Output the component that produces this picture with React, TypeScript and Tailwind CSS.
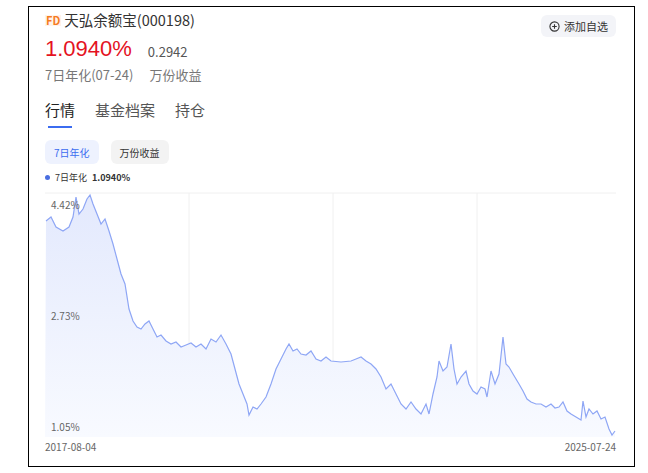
import React from "react";

const pts: [number, number][] = [[45,222],[50,218],[55,228],[62,232],[68,228],[72,218],[75,198],[78,215],[82,210],[86,200],[89,196],[92,205],[96,215],[100,225],[104,220],[108,232],[112,245],[116,260],[120,275],[124,285],[128,310],[132,322],[136,328],[140,330],[144,325],[148,322],[152,330],[156,338],[160,336],[165,342],[170,345],[175,343],[180,348],[185,346],[190,344],[195,348],[200,345],[205,350],[210,340],[215,343],[220,336],[225,345],[230,355],[234,370],[238,385],[242,395],[246,405],[248,416],[252,408],[256,410],[260,405],[265,398],[270,385],[275,370],[280,360],[285,350],[288,345],[292,352],[296,350],[300,355],[305,356],[310,352],[315,360],[320,362],[325,358],[330,362],[340,363],[350,362],[355,360],[360,358],[365,362],[370,365],[375,370],[380,378],[385,390],[390,385],[395,395],[400,405],[405,410],[410,403],[415,410],[420,415],[425,405],[428,415],[432,395],[436,378],[438,362],[442,372],[446,368],[450,345],[453,370],[456,385],[460,378],[465,372],[468,385],[472,392],[476,395],[480,388],[484,390],[486,398],[490,372],[494,385],[498,375],[502,338],[505,365],[508,368],[512,375],[518,385],[522,392],[526,400],[530,403],[535,405],[540,405],[545,408],[550,405],[554,409],[558,408],[562,403],[566,412],[570,415],[575,418],[580,421],[582,402],[585,418],[588,410],[592,415],[596,412],[600,420],[604,418],[608,430],[611,436],[614,432]];

export default function App() {
  const ox = 44, oy = 192;
  const line = pts.map(([x, y]) => `${x - ox},${y - oy}`).join(" ");
  const area = `0,246 ${line} ${614 - ox},246`;
  return (
    <div className="w-[648px] h-[473px] bg-white pt-[6px] pl-[28px]" style={{ fontFamily: '"Noto Sans CJK SC", "Liberation Sans", sans-serif' }}>
      <div className="w-[607px] h-[461px] border-[1.5px] border-black relative px-[16px]">
        <div className="flex items-center pt-[4px] h-[22px]">
          <span className="text-[11px] font-bold text-[#f57c1f] bg-[#fff3ea] px-[1px] leading-none mr-[3px]">FD</span>
          <span className="text-[14.5px] text-[#333]">天弘余额宝(000198)</span>
        </div>
        <button className="absolute right-[18px] top-[8px] h-[22px] px-[8px] rounded-[6px] bg-[#f3f4f8] text-[11px] text-[#333] flex items-center gap-[4px]">
          <svg width="11" height="11" viewBox="0 0 12 12"><circle cx="6" cy="6" r="5" fill="none" stroke="#333" strokeWidth="1.2"/><path d="M6 3.5v5M3.5 6h5" stroke="#333" strokeWidth="1.2"/></svg>
          添加自选
        </button>
        <div className="flex items-end mt-[7px]">
          <span className="text-[22px] leading-[26px] text-[#e4131f]" style={{ fontFamily: '"Liberation Sans", sans-serif' }}>1.0940%</span>
          <span className="ml-[16px] text-[13px] text-[#555] leading-[20px]">0.2942</span>
        </div>
        <div className="flex text-[13px] text-[#777] mt-[3px]">
          <span>7日年化(07-24)</span>
          <span className="ml-[16px]">万份收益</span>
        </div>
        <div className="flex text-[15px] text-[#555] mt-[14px] gap-[20px]">
          <div className="flex flex-col items-center"><span className="text-[#222]">行情</span><div className="w-[24px] h-[2px] bg-[#3b6cf0] mt-[5px]" /></div>
          <span>基金档案</span>
          <span>持仓</span>
        </div>
        <div className="flex gap-[12px] mt-[12px] text-[10px]">
          <span className="px-[9px] h-[24px] flex items-center rounded-[6px] bg-[#eef2fe] text-[#3b6cf0]">7日年化</span>
          <span className="px-[9px] h-[24px] flex items-center rounded-[6px] bg-[#f3f3f3] text-[#333]">万份收益</span>
        </div>
        <div className="flex items-center mt-[7px] text-[9px] text-[#333] gap-[5px]">
          <span className="w-[5px] h-[5px] rounded-full bg-[#4a6ee0]" />
          <span>7日年化</span><span className="font-bold">1.0940%</span>
        </div>
        <div className="relative mt-[6px] h-[246px] w-[571px]">
          <svg width="571" height="246" className="absolute left-0 top-0">
            <defs>
              <linearGradient id="g" x1="0" y1="0" x2="0" y2="1">
                <stop offset="0" stopColor="#e3e9fd" />
                <stop offset="1" stopColor="#f8faff" />
              </linearGradient>
            </defs>
            <line x1="0" y1="2" x2="571" y2="2" stroke="#f0f0f0" />
            <line x1="144" y1="2" x2="144" y2="246" stroke="#f0f0f0" />
            <line x1="288" y1="2" x2="288" y2="246" stroke="#f0f0f0" />
            <line x1="432" y1="2" x2="432" y2="246" stroke="#f0f0f0" />
            <polygon points={area} fill="url(#g)" />
            <polyline points={line} fill="none" stroke="#8ea6f5" strokeWidth="1.2" />
          </svg>
          <span className="absolute left-[6px] top-[6px] text-[10px] text-[#666]">4.42%</span>
          <span className="absolute left-[6px] top-[117px] text-[10px] text-[#666]">2.73%</span>
          <span className="absolute left-[6px] top-[228px] text-[10px] text-[#666]">1.05%</span>
        </div>
        <div className="flex justify-between w-[571px] text-[10px] text-[#666] mt-[2px]">
          <span>2017-08-04</span><span>2025-07-24</span>
        </div>
      </div>
    </div>
  );
}
